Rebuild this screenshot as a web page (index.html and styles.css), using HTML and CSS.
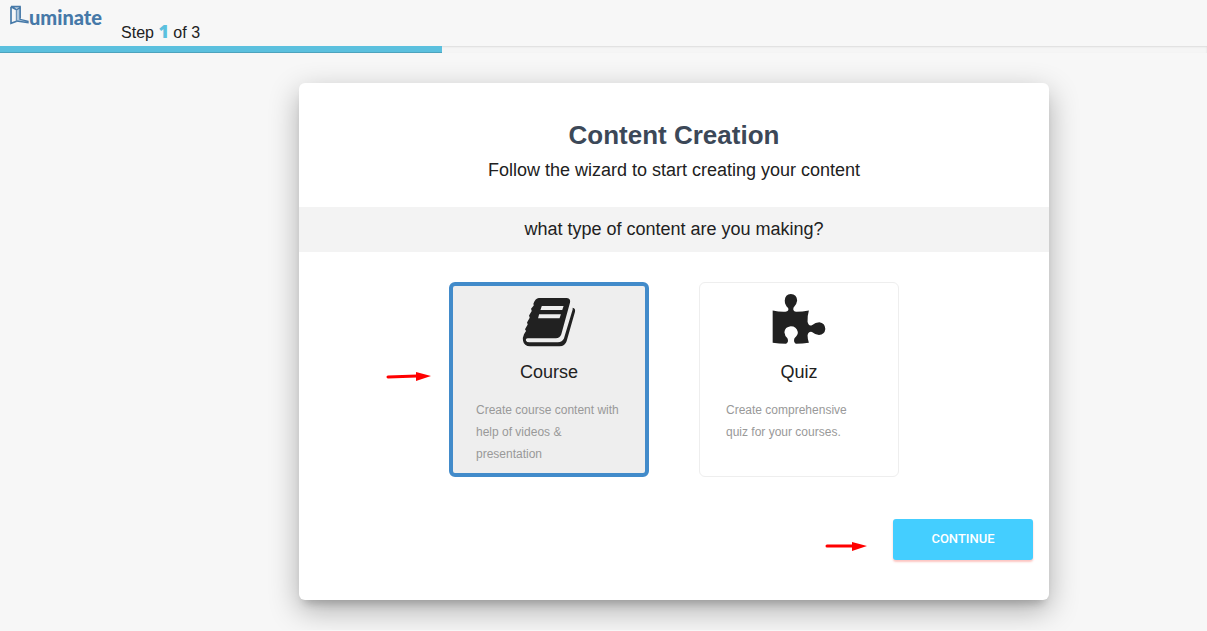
FILE: index.html
```html
<!DOCTYPE html>
<html lang="en">
<head>
<meta charset="utf-8">
<title>Content Creation</title>
<link rel="stylesheet" href="styles.css">
</head>
<body>
<header class="topbar">
  <div class="brand">
    <svg class="brand-mark" viewBox="0 0 60 60" aria-hidden="true">
      <path d="M6 5V55L23 49M6 5L23 14V49M6 5H33V40" fill="none" stroke="#4679a8" stroke-width="5"/>
      <path d="M23 14L33 8V43L57 49V53L23 48" fill="#b4cadd" stroke="#4679a8" stroke-width="4"/>
    </svg>
    <span class="brand-name">uminate</span>
  </div>
  <p class="step">Step <strong class="step-number">1</strong> of 3</p>
</header>
<div class="progress"><div class="progress-bar"></div></div>
<main class="page">
  <form class="wizard">
    <div class="wizard-header">
      <h1 class="title">Content Creation</h1>
      <p class="subtitle">Follow the wizard to start creating your content</p>
    </div>
    <h2 class="question">what type of content are you making?</h2>
    <div class="choices">
      <label class="choice">
        <input class="choice-input" type="radio" name="type" value="course" checked>
        <svg class="choice-icon" viewBox="249 54 158 158" aria-hidden="true">
          <path fill="#212121" fill-rule="evenodd" d="M296 69H380Q392 71 389 83L363 178Q359 189 347 189H263Q256 190 258 196Q260 201 268 201H353Q366 201 371 190L397 103V98Q406 99 404 110L379 198Q374 213 358 213H270Q252 212 249 196Q247 188 252 177L258 167L255 162L263 148L261 142L269 128L267 121L275 108L273 101L281 91L280 86Q286 70 296 69ZM305 93L301 105H366L370 93ZM297 117L294 129H358L362 117Z"/>
        </svg>
        <span class="choice-name">Course</span>
        <span class="choice-text">Create course content with help of videos &amp; presentation</span>
      </label>
      <label class="choice">
        <input class="choice-input" type="radio" name="type" value="quiz">
        <svg class="choice-icon" viewBox="250 53 158 158" aria-hidden="true">
          <path fill="#212121" d="M249 105Q270 110 287 109Q299 107 295 98Q285 88 285 75Q286 57 303 56Q321 57 322 75Q321 87 311 97Q308 108 320 109Q337 109 357 105Q352 122 353 139Q356 153 366 149Q377 140 388 140Q405 142 406 160Q404 177 387 178Q376 177 366 169Q355 167 353 180Q353 190 357 201Q338 204 318 204Q310 199 314 188Q325 177 324 169Q320 152 303 152Q285 154 284 170Q285 181 293 188Q298 200 289 204Q268 204 249 201Z"/>
        </svg>
        <span class="choice-name">Quiz</span>
        <span class="choice-text">Create comprehensive quiz for your courses.</span>
      </label>
      <svg class="arrow arrow-choice" viewBox="0 0 46 12" aria-hidden="true"><path d="M3 7L32 6" stroke="red" stroke-width="3" stroke-linecap="round"/><path d="M31 2L46 6L31 11Z" fill="red"/></svg>
    </div>
    <div class="wizard-footer">
      <svg class="arrow arrow-continue" viewBox="0 0 42 12" aria-hidden="true"><path d="M2 6H28" stroke="red" stroke-width="3" stroke-linecap="round"/><path d="M27 2L42 6L27 11Z" fill="red"/></svg>
      <button class="continue" type="button">CONTINUE</button>
    </div>
  </form>
</main>
</body>
</html>
```
FILE: styles.css
```css
* { box-sizing: border-box; }
body {
  margin: 0;
  background: #f7f7f7;
  color: #212121;
  font-family: "Liberation Sans", Arial, sans-serif;
}
h1, h2, p { margin: 0; }
.topbar {
  display: flex;
  gap: 19px;
  height: 46px;
  padding: 5px 9px;
}
.brand { display: flex; }
.brand-mark { width: 20px; height: 20px; overflow: visible; }
.brand-name {
  color: #4679a8;
  font: 900 20px/24px Lato, sans-serif;
}
.step { padding-top: 16px; font-size: 16px; line-height: 20px; }
.step-number {
  color: #5bc0de;
  font: 800 18px/20px "Open Sans", sans-serif;
}
.progress {
  height: 7px;
  background: #f5f5f5;
  box-shadow: inset 0 1px 2px rgba(0, 0, 0, 0.1);
}
.progress-bar {
  width: 36.6%;
  height: 100%;
  background: #5bc0de;
  box-shadow: inset 0 -1px 0 rgba(0, 0, 0, 0.15);
}
.page { padding: 30px 0 30px 141px; }
.wizard {
  max-width: 750px;
  margin: 0 auto;
  padding: 36px 0 40px;
  background: #fff;
  border-radius: 6px;
  box-shadow: 0 10px 30px rgba(0, 0, 0, 0.3), 0 8px 10px -5px rgba(0, 0, 0, 0.2);
}
.wizard-header { padding-bottom: 25px; text-align: center; }
.title { color: #3c4858; font-size: 26px; line-height: 32px; }
.subtitle { padding-top: 7px; font-size: 18px; line-height: 24px; }
.question {
  background: #f3f3f3;
  font-size: 18px;
  font-weight: 400;
  line-height: 45px;
  text-align: center;
}
.choices {
  position: relative;
  display: flex;
  justify-content: center;
  gap: 50px;
  padding: 30px 0 42px;
}
.choice {
  display: flex;
  flex-direction: column;
  align-items: center;
  width: 200px;
  min-height: 195px;
  padding: 10px 26px;
  border: 1px solid #eee;
  border-radius: 6px;
  cursor: pointer;
}
.choice:has(:checked) {
  padding: 7px 23px;
  border: 4px solid #428bca;
  background: #eee;
}
.choice-input { position: absolute; opacity: 0; }
.choice-icon { width: 53px; height: 53px; overflow: visible; }
.choice-name { padding-top: 14px; font-size: 18px; line-height: 24px; }
.choice-text {
  align-self: stretch;
  padding-top: 15px;
  color: #999;
  font-size: 12px;
  line-height: 22px;
}
.wizard-footer {
  position: relative;
  display: flex;
  justify-content: flex-end;
  padding: 0 16px;
}
.continue {
  width: 140px;
  height: 41px;
  padding: 0 0 2px;
  border: 0;
  border-radius: 3px;
  background: #44ceff;
  box-shadow: 0 2px 2px rgba(244, 67, 54, 0.3);
  color: #fff;
  font: 500 13px/16px Roboto, Arial, sans-serif;
}
.arrow { position: absolute; height: 12px; fill: none; }
.arrow-choice { top: 118px; left: 86px; width: 46px; }
.arrow-continue { top: 21px; right: 182px; width: 42px; }
```
